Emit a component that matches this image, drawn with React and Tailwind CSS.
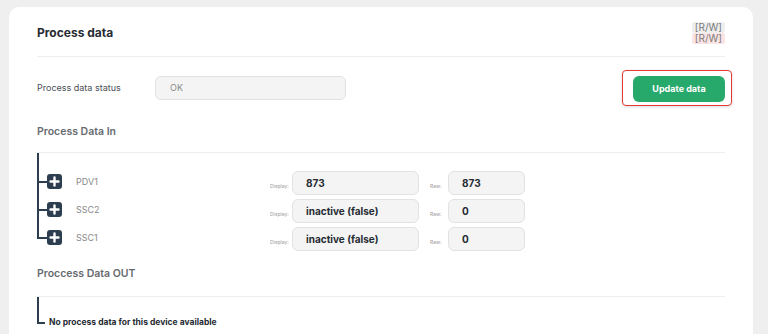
import React from "react"

const rows = [
	{ name: "PDV1", display: "873", raw: "873" },
	{ name: "SSC2", display: "inactive (false)", raw: "0" },
	{ name: "SSC1", display: "inactive (false)", raw: "0" },
]

function PlusIcon() {
	return (
		<div className="w-[15px] h-[15px] rounded-[3px] bg-[#2c3e50] flex items-center justify-center">
			<svg width="11" height="11" viewBox="0 0 11 11">
				<path d="M5.5 1.5v8M1.5 5.5h8" stroke="#fff" strokeWidth="2.4" strokeLinecap="round" />
			</svg>
		</div>
	)
}

export default function App() {
	return (
		<div
			className="h-screen overflow-hidden bg-[#efefef] pt-[7px] pl-[9px] pr-[15px]"
			style={{ fontFamily: "Inter, 'Liberation Sans', sans-serif" }}>
			<div className="bg-white rounded-[10px] px-[28px] pt-[15px] pb-8 min-h-[340px]">
				{/* header */}
				<div className="flex items-center justify-between">
					<h1 className="text-[12px] font-bold text-[#262b33]">Process data</h1>
					<div className="flex flex-col text-[10px] leading-[11px] text-[#7a7a7a]">
						<span className="bg-[#efefef] rounded-[2px] px-[3px]">[R/W]</span>
						<span className="bg-[#fbe4e4] rounded-[2px] px-[3px]">[R/W]</span>
					</div>
				</div>
				<div className="mt-[12px] border-t border-[#eeeeee]" />

				{/* status row */}
				<div className="mt-[14px] flex items-center h-[34px]">
					<span className="w-[118px] text-[9px] text-[#4a4f57]">Process data status</span>
					<div className="w-[191px] h-[24px] rounded-[6px] bg-[#f4f4f4] border border-[#e2e2e2] flex items-center px-[14px] text-[9px] text-[#8a8a8a]">
						OK
					</div>
					<div className="ml-auto mr-[-7px] border-[1.5px] border-[#e53935] rounded-[4px] pl-[10px] pr-[6px] py-[3px] shadow-[0_1px_3px_rgba(0,0,0,0.15)]">
						<button className="w-[92px] h-[26px] rounded-[6px] bg-[#27a96b] text-white text-[9px] font-bold">
							Update data
						</button>
					</div>
				</div>

				{/* process data in */}
				<h2 className="mt-[19px] text-[10.5px] font-semibold text-[#676b70] leading-[16px]">Process Data In</h2>
				<div className="mt-[12px] border-t border-[#eeeeee]" />
				<div className="relative pt-[18px] flex flex-col gap-[4px]">
					<div className="absolute left-0 top-0 bottom-[12px] w-[2px] bg-[#2c3e50]" />
					{rows.map((r) => (
						<div key={r.name} className="flex items-center h-[24px]">
							<div className="w-[233px] flex items-center -mt-[3px]">
								<div className="w-[10px] h-[2px] bg-[#2c3e50]" />
								<PlusIcon />
								<span className="ml-[14px] text-[9px] text-[#8a8a8a]">{r.name}</span>
							</div>
							<span className="w-[22px] self-end pb-[5px] text-[5px] text-[#999]">Display:</span>
							<div className="w-[127px] h-[24px] rounded-[6px] bg-[#f4f4f4] border border-[#e2e2e2] flex items-center px-[13px] text-[10px] font-bold text-[#262b33]">
								{r.display}
							</div>
							<span className="w-[29px] self-end pb-[5px] pl-[11px] text-[5px] text-[#999]">Raw:</span>
							<div className="w-[77px] h-[24px] rounded-[6px] bg-[#f4f4f4] border border-[#e2e2e2] flex items-center px-[13px] text-[10px] font-bold text-[#262b33]">
								{r.raw}
							</div>
						</div>
					))}
				</div>

				{/* process data out */}
				<h2 className="mt-[15px] text-[10.5px] font-semibold text-[#676b70] leading-[16px]">Proccess Data OUT</h2>
				<div className="mt-[14px] border-t border-[#eeeeee]" />
				<div className="flex items-end">
					<div className="w-[8px] h-[27px] border-l-2 border-b-2 border-[#2c3e50]" />
					<span className="ml-[4px] -mb-[5px] text-[8.5px] font-bold text-[#262b33]">
						No process data for this device available
					</span>
				</div>
			</div>
		</div>
	)
}
